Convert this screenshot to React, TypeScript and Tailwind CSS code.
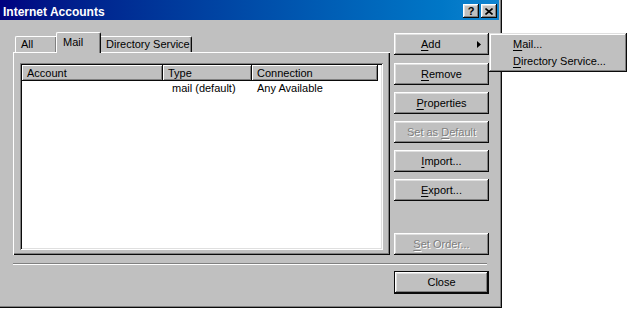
import type { ReactNode } from 'react';

const raised =
  'shadow-[inset_-1px_-1px_#0a0a0a,inset_1px_1px_#ffffff,inset_-2px_-2px_#808080,inset_2px_2px_#dfdfdf]';

interface WinButtonProps {
  children: ReactNode;
  disabled?: boolean;
  className?: string;
}

const WinButton = ({ children, disabled, className = '' }: WinButtonProps) => (
  <div
    className={`flex h-[22px] w-[95px] items-center justify-center bg-[#c0c0c0] ${raised} ${
      disabled ? 'text-[#808080] [text-shadow:1px_1px_0_#ffffff]' : 'text-black'
    } ${className}`}
  >
    {children}
  </div>
);

const U = ({ children }: { children: ReactNode }) => <span className="underline underline-offset-[2px]">{children}</span>;

const HeaderCell = ({ label, width }: { label: string; width: string }) => (
  <div
    className={`${width} flex h-[16px] items-center bg-[#c0c0c0] pl-[5px] shadow-[inset_-1px_-1px_#0a0a0a,inset_1px_1px_#ffffff,inset_-2px_-2px_#808080]`}
  >
    {label}
  </div>
);

const TitleButton = ({ children }: { children: ReactNode }) => (
  <div className={`flex h-[14px] w-[16px] items-center justify-center bg-[#c0c0c0] ${raised}`}>{children}</div>
);

export default function App() {
  return (
    <div className="relative h-[309px] w-[629px] bg-white font-['Liberation_Sans',Arial,sans-serif] text-[11px] leading-[13px] text-black">
      <div className="flex h-[308px] w-[502px] flex-col bg-[#c0c0c0] shadow-[inset_-1px_-1px_#0a0a0a,inset_-2px_-2px_#808080]">
        {/* title bar */}
        <div className="flex h-[20px] w-[499px] items-start bg-gradient-to-r from-[#000080] to-[#1084d0] pl-[3px] pr-[2px] pt-[5px]">
          <span className="text-[12px] font-bold leading-[14px] text-white">Internet Accounts</span>
          <div className="ml-auto mt-[-1px] flex gap-[2px]">
            <TitleButton>
              <span className="text-[11px] font-bold leading-none">?</span>
            </TitleButton>
            <TitleButton>
              <svg width="8" height="7" viewBox="0 0 8 7">
                <path d="M0.5 0.5 L7.5 6.5 M7.5 0.5 L0.5 6.5" stroke="#000" strokeWidth="1.6" />
              </svg>
            </TitleButton>
          </div>
        </div>

        <div className="flex items-start gap-[4px] pl-[13px]">
          {/* left: tabs + panel */}
          <div className="mt-[12px] w-[377px]">
            <div className="flex h-[20px] items-end pl-[2px]">
              <div className="flex h-[16px] w-[41px] items-center rounded-tl-[2px] border-l border-t border-white pl-[5px] shadow-[inset_-1px_0_#808080]">
                All
              </div>
              <div className="relative z-10 mb-[-1px] flex h-[21px] w-[45px] items-start rounded-t-[2px] border-l border-r border-t border-l-white border-r-[#0a0a0a] border-t-white bg-[#c0c0c0] pl-[6px] pt-[3px] shadow-[inset_-1px_0_#808080]">
                Mail
              </div>
              <div className="flex h-[16px] w-[91px] items-center rounded-tr-[2px] border-r border-t border-r-[#0a0a0a] border-t-white pl-[5px] shadow-[inset_-1px_0_#808080]">
                Directory Service
              </div>
            </div>
            <div className="h-[203px] pb-[5px] pl-[7px] pr-[7px] pt-[11px] shadow-[inset_1px_1px_#ffffff,inset_-1px_-1px_#0a0a0a,inset_-2px_-2px_#808080]">
              <div className="h-[187px] bg-white p-[2px] shadow-[inset_1px_1px_#808080,inset_-1px_-1px_#ffffff,inset_2px_2px_#0a0a0a,inset_-2px_-2px_#dfdfdf]">
                <div className="flex">
                  <HeaderCell label="Account" width="w-[141px]" />
                  <HeaderCell label="Type" width="w-[89px]" />
                  <HeaderCell label="Connection" width="w-[126px]" />
                </div>
                <div className="flex h-[15px] items-center">
                  <div className="w-[141px]" />
                  <div className="w-[89px] pl-[9px]">mail (default)</div>
                  <div className="w-[126px] pl-[5px]">Any Available</div>
                </div>
              </div>
            </div>
          </div>

          {/* right: buttons */}
          <div className="mt-[13px] flex flex-col">
            <WinButton className="justify-start">
              <span className="ml-[27px]">
                <U>A</U>dd
              </span>
              <svg className="ml-auto mr-[8px]" width="4" height="7" viewBox="0 0 4 7">
                <polygon points="0,0 4,3.5 0,7" fill="#000" />
              </svg>
            </WinButton>
            <WinButton className="mt-[8px]">
              <span>
                <U>R</U>emove
              </span>
            </WinButton>
            <WinButton className="mt-[7px]">
              <span>
                <U>P</U>roperties
              </span>
            </WinButton>
            <WinButton className="mt-[7px]" disabled>
              <span>
                Set as <U>D</U>efault
              </span>
            </WinButton>
            <WinButton className="mt-[7px]">
              <span>
                <U>I</U>mport...
              </span>
            </WinButton>
            <WinButton className="mt-[7px]">
              <span>
                <U>E</U>xport...
              </span>
            </WinButton>
            <WinButton className="mt-[32px]" disabled>
              <span>
                <U>S</U>et Order...
              </span>
            </WinButton>
          </div>
        </div>

        {/* separator */}
        <div className="ml-[13px] mt-[8px] h-[2px] w-[474px] border-b border-t border-b-white border-t-[#808080]" />

        <div className="ml-[394px] mt-[6px] h-[23px] w-[95px] border border-[#0a0a0a]">
          <div className={`flex h-full w-full items-center justify-center bg-[#c0c0c0] ${raised}`}>Close</div>
        </div>
      </div>

      {/* Add submenu */}
      <div className="absolute left-[489px] top-[33px] h-[39px] w-[138px] bg-[#c0c0c0] pb-[2px] pt-[3px] shadow-[inset_-1px_-1px_#0a0a0a,inset_1px_1px_#dfdfdf,inset_-2px_-2px_#808080,inset_2px_2px_#ffffff]">
        <div className="flex h-[17px] items-center pl-[24px]">
          <span>
            <U>M</U>ail...
          </span>
        </div>
        <div className="flex h-[17px] items-center pl-[24px]">
          <span>
            <U>D</U>irectory Service...
          </span>
        </div>
      </div>
    </div>
  );
}
